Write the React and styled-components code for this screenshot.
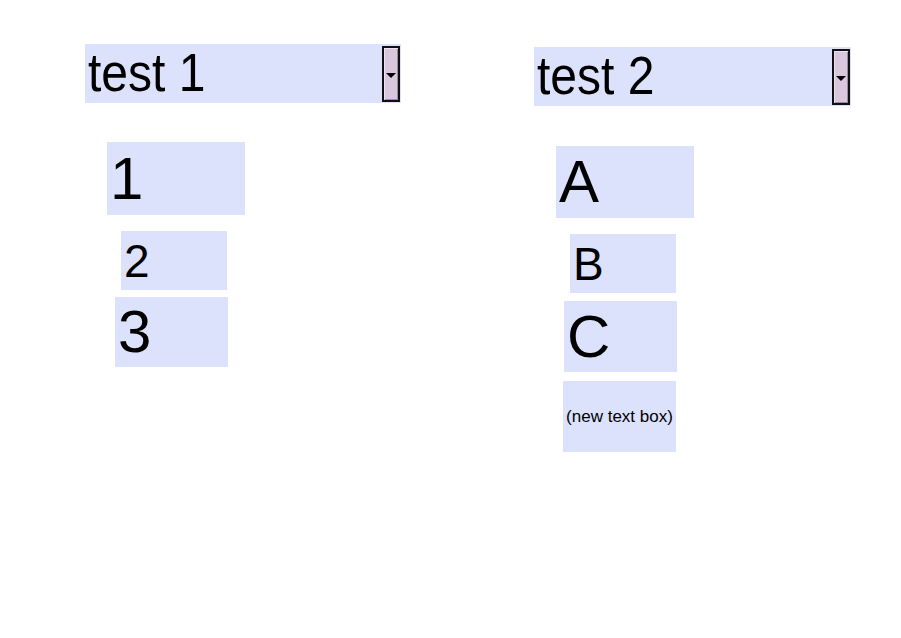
import { createGlobalStyle } from "styled-components";
import styled from "styled-components";

const GlobalStyle = createGlobalStyle`
 html, body {
  margin: 0;
  padding: 0;
  background: #ffffff;
 }
 body {
  font-family: "Liberation Sans", Arial, sans-serif;
  color: #000;
 }
`;

const Canvas = styled.div`
 width: 901px;
 height: 638px;
 display: grid;
 grid-template-columns: 449px 1fr;
 align-items: start;
 padding-left: 85px;
 padding-top: 44px;
 box-sizing: border-box;
`;

const Column = styled.div`
 display: flex;
 flex-direction: column;
 align-items: flex-start;
 padding-top: ${(p) => p.$offset || 0}px;
`;

const Combo = styled.div`
 width: ${(p) => p.$width}px;
 height: 59px;
 background: #dde2fc;
 display: flex;
 align-items: center;
 justify-content: space-between;
 box-sizing: border-box;
 padding: 0 1px 0 3px;
`;

const ComboText = styled.span`
 font-size: 54px;
 line-height: 59px;
 margin-top: -3px;
 transform: scaleX(0.89);
 transform-origin: left center;
`;

const DropButton = styled.div`
 width: 18px;
 height: 56px;
 box-sizing: border-box;
 border: 2px solid #111;
 background: #d9c7dd;
 box-shadow: inset 1px 1px 0 #eee2ef, inset -1px -1px 0 #9c8ca0;
 display: flex;
 align-items: center;
 justify-content: center;
 margin-top: 1px;

 &::after {
  content: "";
  width: 0;
  height: 0;
  border-left: 5px solid transparent;
  border-right: 5px solid transparent;
  border-top: 5px solid #000;
  margin-top: 2px;
 }
`;

const Field = styled.div`
 margin-top: ${(p) => p.$gap}px;
 margin-left: ${(p) => p.$indent}px;
 width: ${(p) => p.$w}px;
 height: ${(p) => p.$h}px;
 background: #dde2fc;
 display: flex;
 align-items: center;
 justify-content: ${(p) => (p.$center ? "center" : "flex-start")};
 padding-left: ${(p) => (p.$center ? 0 : 3)}px;
 box-sizing: border-box;
 font-size: ${(p) => p.$size}px;
 line-height: 1;
 white-space: nowrap;
`;

const left = [
 { text: "1", gap: 39, indent: 22, w: 138, h: 73, size: 60 },
 { text: "2", gap: 16, indent: 36, w: 106, h: 59, size: 46 },
 { text: "3", gap: 7, indent: 30, w: 113, h: 70, size: 60 },
];

const right = [
 { text: "A", gap: 40, indent: 22, w: 138, h: 72, size: 60 },
 { text: "B", gap: 16, indent: 36, w: 106, h: 59, size: 46 },
 { text: "C", gap: 8, indent: 30, w: 113, h: 71, size: 60 },
 { text: "(new text box)", gap: 9, indent: 29, w: 113, h: 71, size: 17, center: true },
];

function FieldColumn({ title, width, offset, fields }) {
 return (
  <Column $offset={offset}>
   <Combo $width={width}>
    <ComboText>{title}</ComboText>
    <DropButton />
   </Combo>
   {fields.map((f) => (
    <Field
     key={f.text}
     $gap={f.gap}
     $indent={f.indent}
     $w={f.w}
     $h={f.h}
     $size={f.size}
     $center={f.center}
    >
     {f.text}
    </Field>
   ))}
  </Column>
 );
}

export default function App() {
 return (
  <>
   <GlobalStyle />
   <Canvas>
    <FieldColumn title="test 1" width={316} offset={0} fields={left} />
    <FieldColumn title="test 2" width={317} offset={3} fields={right} />
   </Canvas>
  </>
 );
}
